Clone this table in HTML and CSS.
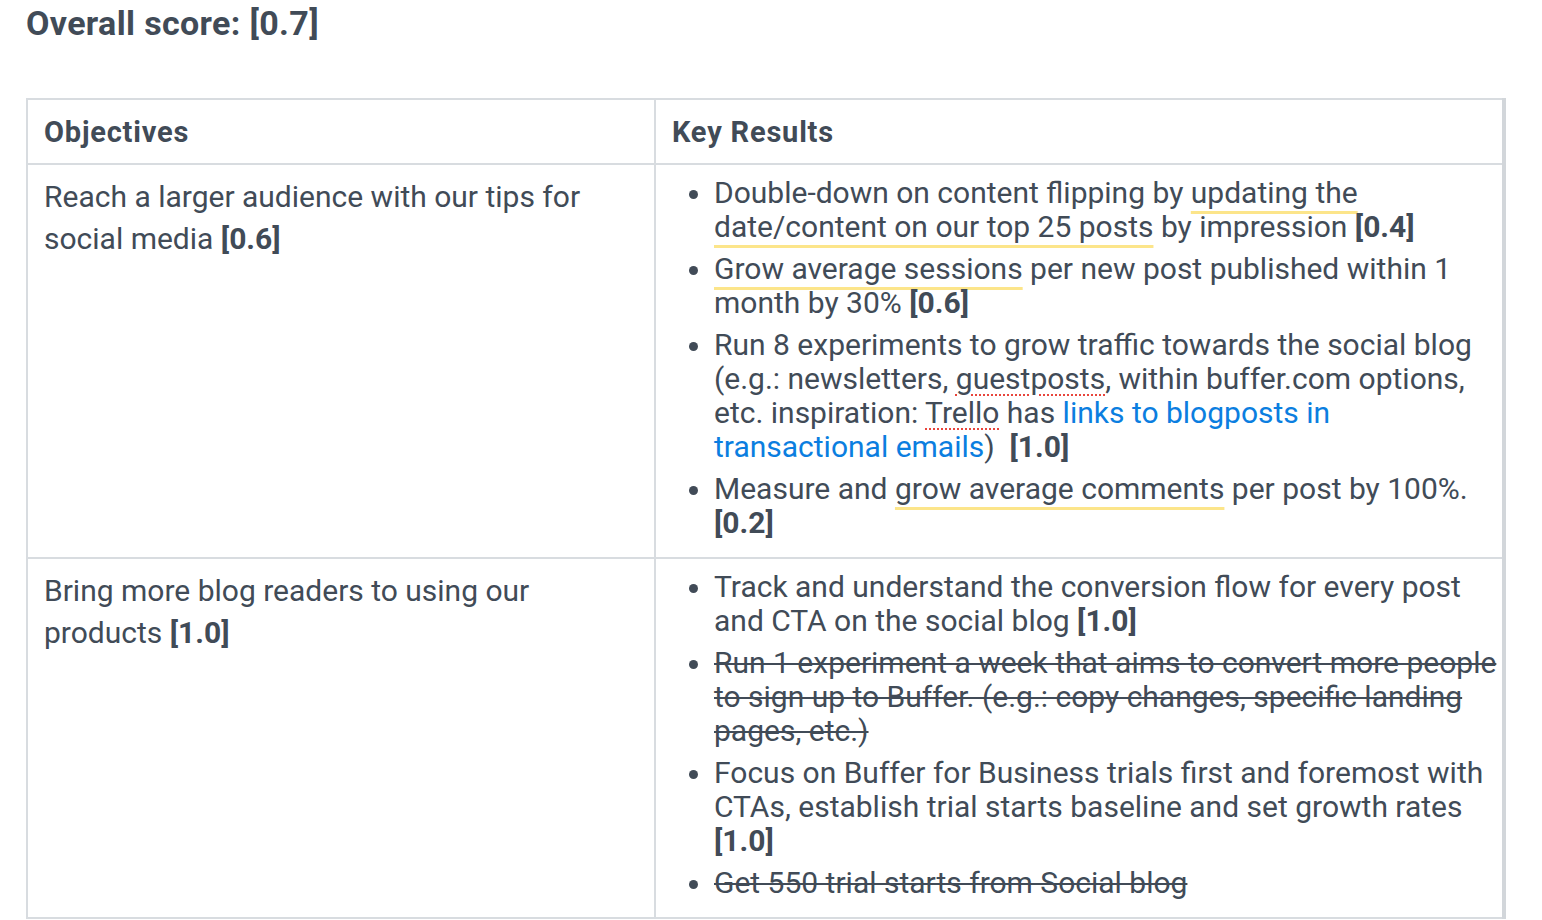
FILE: index.html
```html
<!DOCTYPE html>
<html lang="en">
<head>
<meta charset="utf-8">
<title>OKRs</title>
<link rel="stylesheet" href="styles.css">
</head>
<body>
<h2 class="score">Overall score: [0.7]</h2>
<table class="okr">
  <thead>
    <tr>
      <th class="col-obj">Objectives</th>
      <th class="col-kr">Key Results</th>
    </tr>
  </thead>
  <tbody>
    <tr>
      <td class="obj"><p>Reach a larger audience with our tips for social media <b>[0.6]</b></p></td>
      <td class="kr">
        <ul>
          <li>Double-down on content flipping by <span class="hl">updating the date/content on our top 25 posts</span> by impression <b>[0.4]</b></li>
          <li><span class="hl">Grow average sessions</span> per new post published within 1 month by 30% <b>[0.6]</b></li>
          <li>Run 8 experiments to grow traffic towards the social blog (e.g.: newsletters, <span class="spell">guestposts</span>, within buffer.com options, etc. inspiration: <span class="spell">Trello</span> has <a class="link">links to blogposts in transactional emails</a>)&nbsp; <b>[1.0]</b></li>
          <li>Measure and <span class="hl">grow average comments</span> per post by 100%. <b>[0.2]</b></li>
        </ul>
      </td>
    </tr>
    <tr>
      <td class="obj"><p>Bring more blog readers to using our products <b>[1.0]</b></p></td>
      <td class="kr">
        <ul>
          <li>Track and understand the conversion flow for every post and CTA on the social blog <b>[1.0]</b></li>
          <li><s>Run 1 experiment a week that aims to convert more people to sign up to Buffer. (e.g.: copy changes, specific landing pages, etc.)</s></li>
          <li>Focus on Buffer for Business trials first and foremost with CTAs, establish trial starts baseline and set growth rates <b>[1.0]</b></li>
          <li><s>Get 550 trial starts from Social blog</s></li>
        </ul>
      </td>
    </tr>
  </tbody>
</table>
</body>
</html>
```
FILE: styles.css
```css
html, body {
  margin: 0;
  padding: 0;
  background: #ffffff;
}
body {
  font-family: Roboto, "Liberation Sans", sans-serif;
  color: #414b57;
  padding: 0 0 0 26px;
}
.score {
  margin: 0;
  padding-top: 3px;
  font-size: 34px;
  line-height: 40px;
  font-weight: 700;
  letter-spacing: 0.35px;
  color: #414b57;
}
.okr {
  margin-top: 55px;
  border-collapse: collapse;
  width: 1480px;
  table-layout: fixed;
}
.okr th, .okr td {
  border: 2px solid #d8dce0;
  vertical-align: top;
  text-align: left;
}
.okr tr > :last-child {
  border-right: 4px solid #d2d6da;
}
.okr th {
  font-size: 29px;
  font-weight: 700;
  letter-spacing: 0.8px;
  height: 63px;
  padding: 0 16px;
  vertical-align: middle;
}
.col-obj { width: 594px; }
.okr td {
  padding: 11px 16px 17px;
  font-size: 30px;
  letter-spacing: 0;
}
.okr td.kr {
  padding-right: 4px;
}
.obj p {
  margin: 0;
  line-height: 42px;
}
.kr ul {
  margin: 0;
  padding-left: 42px;
  line-height: 34px;
  list-style: disc;
}
.kr li + li {
  margin-top: 8px;
}
b {
  font-weight: 700;
}
.hl {
  text-decoration: underline;
  text-decoration-color: #fce58a;
  text-decoration-thickness: 3px;
  text-underline-offset: 8px;
  text-decoration-skip-ink: none;
}
.spell {
  text-decoration: underline dotted #e8453c;
  text-decoration-thickness: 2px;
  text-underline-offset: 5px;
}
.link {
  color: #0b7ee0;
  text-decoration: none;
}
s {
  text-decoration-thickness: 2px;
}
```
